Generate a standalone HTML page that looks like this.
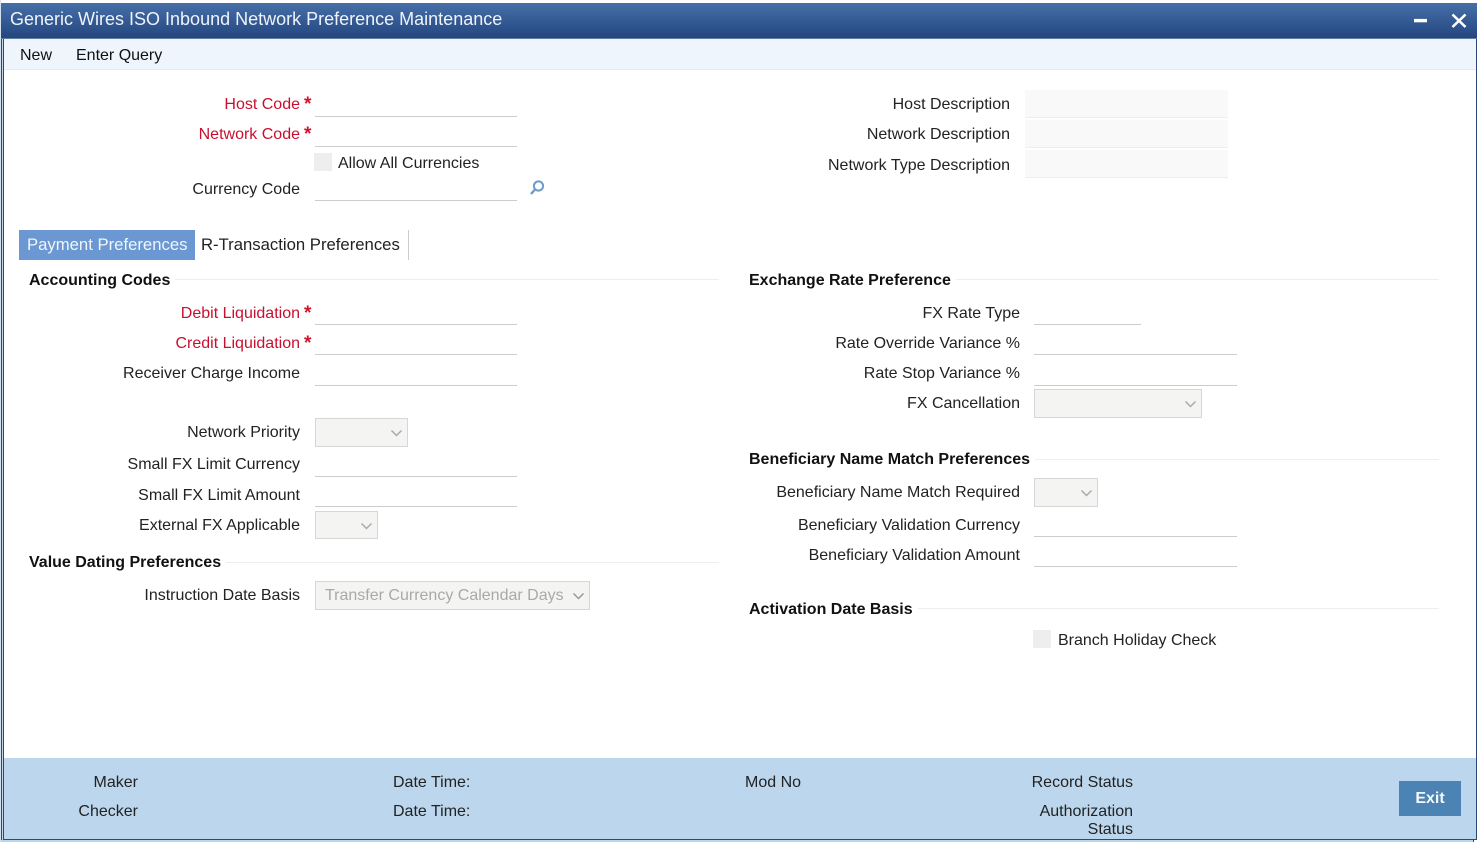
<!DOCTYPE html>
<html><head><meta charset="utf-8"><style>
html,body{margin:0;padding:0;background:#fff;width:1479px;height:842px;overflow:hidden}
body{position:relative;font-family:"Liberation Sans",sans-serif;font-size:16px;color:#222}
div,span.t{position:absolute}
.t{line-height:20px;white-space:nowrap}
.l{position:absolute;line-height:20px;white-space:nowrap;text-align:right;margin-top:2px}
.d{margin-top:1px}
.r{color:#c8102e}
.a{position:absolute;left:304px;color:#d0142c;font-weight:bold;font-size:19px;line-height:20px;margin-top:2px}
.u{position:absolute;height:0;border-bottom:1px solid #ccc;width:202px}
.v{width:203px}
.h{position:absolute;line-height:20px;font-weight:bold;color:#111;white-space:nowrap;background:#fff;padding-right:5px;margin-top:2px}
.hr{position:absolute;height:1px;background:#eee}
.s{position:absolute;background:#f4f4f2;border:1px solid #d6d6d6;box-sizing:border-box;height:29px}
.s svg{position:absolute;top:10px}
.ro{position:absolute;background:#f9f9f9;left:1025px;width:203px;height:27px;border-bottom:1px solid #eee}
.c{position:absolute;background:#eee;width:18px;height:18px}
</style></head><body>
<div style="left:0;top:840px;width:1473px;height:2px;background:#bcd7ed"></div>
<div style="left:0;top:0;width:1px;height:842px;background:#d4e2f0"></div>
<div style="left:1473px;top:840px;width:1px;height:2px;background:#2c4a75"></div>
<div style="left:1px;top:3px;width:1px;height:837px;background:#2c4a75"></div>
<div style="left:2px;top:3px;width:1px;height:837px;background:#c5d5e6"></div>
<div style="left:3px;top:3px;width:1474px;height:837px;border:1px solid #2c4a75;box-sizing:border-box"></div>
<div style="left:1px;top:3px;width:1476px;height:36px;background:linear-gradient(#466fa8,#24467f);border-bottom:1px solid #5f7ea6;box-sizing:border-box"></div>
<div class="t" style="left:10px;top:9px;font-size:18px;color:#eef3fa">Generic Wires ISO Inbound Network Preference Maintenance</div>
<svg style="position:absolute;left:1410px;top:10px" width="60" height="20"><path d="M4 10.6H17" stroke="#fff" stroke-width="3.4"/><path d="M42.5 4.5L55.5 17M55.5 4.5L42.5 17" stroke="#fff" stroke-width="2.6"/></svg>
<div style="left:4px;top:39px;width:1472px;height:31px;background:#eef5fd;border-bottom:1px solid #e8eaee;box-sizing:border-box"></div>
<div class="t" style="left:20px;top:46px;color:#111">New</div>
<div class="t" style="left:76px;top:46px;color:#111">Enter Query</div>

<div class="l r" style="right:1179px;top:93px">Host Code</div><div class="a" style="top:93px">*</div><div class="u" style="left:315px;top:116px"></div>
<div class="l r" style="right:1179px;top:123px">Network Code</div><div class="a" style="top:123px">*</div><div class="u" style="left:315px;top:146px"></div>
<div class="c" style="left:314px;top:153px"></div><div class="t" style="left:338px;top:154px">Allow All Currencies</div>
<div class="l" style="right:1179px;top:178px">Currency Code</div><div class="u" style="left:315px;top:200px"></div>
<svg style="position:absolute;left:529px;top:179px" width="17" height="17"><circle cx="9.5" cy="7" r="4.6" fill="none" stroke="#6f9bc8" stroke-width="2"/><path d="M6 10.5L2 15" stroke="#6f9bc8" stroke-width="2.4"/></svg>

<div class="l d" style="right:469px;top:94px">Host Description</div><div class="ro" style="top:90px"></div>
<div class="l d" style="right:469px;top:124px">Network Description</div><div class="ro" style="top:120px"></div>
<div class="l d" style="right:469px;top:155px">Network Type Description</div><div class="ro" style="top:150px"></div>

<div style="left:19px;top:230px;width:176px;height:30px;background:#6b98d2"></div>
<div class="t" style="left:27px;top:235px;font-size:16.7px;color:#f0f5fb">Payment Preferences</div>
<div class="t" style="left:201px;top:235px;font-size:16.7px;color:#222">R-Transaction Preferences</div>
<div style="left:408px;top:230px;width:1px;height:30px;background:#ccc"></div>

<div class="hr" style="left:29px;top:279px;width:690px"></div><div class="h" style="left:29px;top:269px">Accounting Codes</div>
<div class="l r" style="right:1179px;top:302px">Debit Liquidation</div><div class="a" style="top:302px">*</div><div class="u" style="left:315px;top:324px"></div>
<div class="l r" style="right:1179px;top:332px">Credit Liquidation</div><div class="a" style="top:332px">*</div><div class="u" style="left:315px;top:354px"></div>
<div class="l" style="right:1179px;top:362px">Receiver Charge Income</div><div class="u" style="left:315px;top:385px"></div>
<div class="l" style="right:1179px;top:421px">Network Priority</div>
<div class="s" style="left:315px;top:418px;width:93px"><svg style="left:74px" width="13" height="9"><path d="M1.5 1.5L6.5 6.5L11.5 1.5" fill="none" stroke="#aaa" stroke-width="1.5"/></svg></div>
<div class="l" style="right:1179px;top:453px">Small FX Limit Currency</div><div class="u" style="left:315px;top:476px"></div>
<div class="l" style="right:1179px;top:484px">Small FX Limit Amount</div><div class="u" style="left:315px;top:506px"></div>
<div class="l" style="right:1179px;top:514px">External FX Applicable</div>
<div class="s" style="left:315px;top:511px;width:63px;height:28px"><svg style="left:44px" width="13" height="9"><path d="M1.5 1.5L6.5 6.5L11.5 1.5" fill="none" stroke="#aaa" stroke-width="1.5"/></svg></div>
<div class="hr" style="left:29px;top:562px;width:690px"></div><div class="h" style="left:29px;top:551px">Value Dating Preferences</div>
<div class="l" style="right:1179px;top:584px">Instruction Date Basis</div>
<div class="s" style="left:315px;top:581px;width:275px"><span class="t" style="left:9px;top:4px;color:#a9a9a9">Transfer Currency Calendar Days</span><svg style="left:256px" width="13" height="9"><path d="M1.5 1.5L6.5 6.5L11.5 1.5" fill="none" stroke="#999" stroke-width="1.5"/></svg></div>

<div class="hr" style="left:749px;top:279px;width:690px"></div><div class="h" style="left:749px;top:269px">Exchange Rate Preference</div>
<div class="l" style="right:459px;top:302px">FX Rate Type</div><div class="u" style="left:1034px;top:324px;width:107px"></div>
<div class="l" style="right:459px;top:332px">Rate Override Variance %</div><div class="u v" style="left:1034px;top:354px"></div>
<div class="l" style="right:459px;top:362px">Rate Stop Variance %</div><div class="u v" style="left:1034px;top:385px"></div>
<div class="l" style="right:459px;top:392px">FX Cancellation</div>
<div class="s" style="left:1034px;top:389px;width:168px"><svg style="left:149px" width="13" height="9"><path d="M1.5 1.5L6.5 6.5L11.5 1.5" fill="none" stroke="#aaa" stroke-width="1.5"/></svg></div>
<div class="hr" style="left:749px;top:459px;width:690px"></div><div class="h" style="left:749px;top:448px">Beneficiary Name Match Preferences</div>
<div class="l" style="right:459px;top:481px">Beneficiary Name Match Required</div>
<div class="s" style="left:1034px;top:478px;width:64px"><svg style="left:45px" width="13" height="9"><path d="M1.5 1.5L6.5 6.5L11.5 1.5" fill="none" stroke="#aaa" stroke-width="1.5"/></svg></div>
<div class="l" style="right:459px;top:514px">Beneficiary Validation Currency</div><div class="u v" style="left:1034px;top:536px"></div>
<div class="l" style="right:459px;top:544px">Beneficiary Validation Amount</div><div class="u v" style="left:1034px;top:566px"></div>
<div class="hr" style="left:749px;top:608px;width:690px"></div><div class="h" style="left:749px;top:598px">Activation Date Basis</div>
<div class="c" style="left:1033px;top:630px"></div><div class="t" style="left:1058px;top:631px">Branch Holiday Check</div>

<div style="left:4px;top:758px;width:1472px;height:81px;background:#bcd7ed"></div>
<div class="l" style="right:1341px;top:771px">Maker</div>
<div class="l" style="right:1341px;top:800px">Checker</div>
<div class="t" style="left:393px;top:773px">Date Time:</div>
<div class="t" style="left:393px;top:802px">Date Time:</div>
<div class="t" style="left:745px;top:773px">Mod No</div>
<div class="l" style="right:346px;top:771px">Record Status</div>
<div class="l" style="right:346px;top:801px;line-height:18px">Authorization<br>Status</div>
<div style="left:1399px;top:781px;width:62px;height:35px;background:#4a83b4;color:#f2f8fd;font-weight:bold;text-align:center;line-height:35px">Exit</div>
</body></html>
